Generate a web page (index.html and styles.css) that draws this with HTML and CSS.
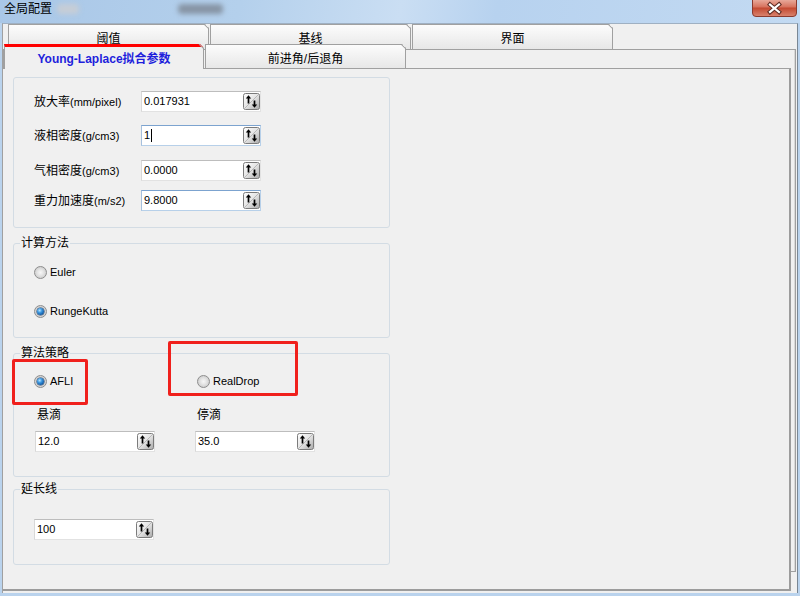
FILE: index.html
```html
<!DOCTYPE html>
<html lang="zh">
<head>
<meta charset="utf-8">
<title>全局配置</title>
<link rel="stylesheet" href="styles.css">
</head>
<body>
<svg class="defs" width="0" height="0" aria-hidden="true">
  <defs>
    <linearGradient id="sg" x1="0" y1="0" x2="1" y2="1">
      <stop offset="0" stop-color="#ffffff"/>
      <stop offset="0.5" stop-color="#e4e4e4"/>
      <stop offset="1" stop-color="#a8a8a8"/>
    </linearGradient>
    <symbol id="spinbtn" viewBox="0 0 17 17">
      <rect x="0.5" y="0.5" width="16" height="16" rx="2" fill="url(#sg)" stroke="#7b7b7b"/>
      <path d="M1.5 15.5 L15.5 1.5" stroke="#b8b8b8" stroke-width="1"/>
      <path d="M5.5 4.5 V10.5" stroke="#000" stroke-width="1.7"/>
      <path d="M2.8 5.6 L5.5 2.2 L8.2 5.6 Z" fill="#000"/>
      <path d="M11.5 7.5 V12.5" stroke="#000" stroke-width="1.7"/>
      <path d="M8.8 11.4 L11.5 14.8 L14.2 11.4 Z" fill="#000"/>
    </symbol>
  </defs>
</svg>
<div class="window">
  <div class="titlebar">
    <span class="title">全局配置</span>
    <span class="redact r-a"></span>
    <span class="redact r-b"></span>
    <div class="close">
      <svg width="45" height="17" viewBox="0 0 45 17">
        <defs>
          <linearGradient id="cg" x1="0" y1="0" x2="0" y2="1">
            <stop offset="0" stop-color="#eab0a2"/>
            <stop offset="0.45" stop-color="#d7735e"/>
            <stop offset="0.52" stop-color="#c34a32"/>
            <stop offset="1" stop-color="#da8570"/>
          </linearGradient>
        </defs>
        <path d="M0.5 -1 V13 Q0.5 16.5 4 16.5 H41 Q44.5 16.5 44.5 13 V-1" fill="url(#cg)" stroke="#8a3b2f"/>
        <path d="M18 4.5 L27 12 M27 4.5 L18 12" stroke="#5b2a22" stroke-width="4.2" stroke-linecap="square"/>
        <path d="M18 4.5 L27 12 M27 4.5 L18 12" stroke="#ffffff" stroke-width="2.2" stroke-linecap="square"/>
      </svg>
    </div>
  </div>

  <div class="client">
    <div class="backbox"></div>
    <div class="tabs">
      <div class="row back">
        <div class="tab">阈值</div>
        <div class="tab">基线</div>
        <div class="tab">界面</div>
      </div>
      <div class="row front">
        <div class="tab sel">Young-Laplace拟合参数</div>
        <div class="tab">前进角/后退角</div>
      </div>
    </div>

    <div class="pane">
      <fieldset class="group g1">
        <div class="field">
          <span class="lbl">放大率<span class="en">(mm/pixel)</span></span>
          <div class="spin"><span class="val">0.017931</span><svg class="sb"><use href="#spinbtn"/></svg></div>
        </div>
        <div class="field">
          <span class="lbl">液相密度<span class="en">(g/cm3)</span></span>
          <div class="spin focus"><span class="val">1<span class="caret"></span></span><svg class="sb"><use href="#spinbtn"/></svg></div>
        </div>
        <div class="field r3">
          <span class="lbl">气相密度<span class="en">(g/cm3)</span></span>
          <div class="spin"><span class="val">0.0000</span><svg class="sb"><use href="#spinbtn"/></svg></div>
        </div>
        <div class="field r4">
          <span class="lbl">重力加速度<span class="en">(m/s2)</span></span>
          <div class="spin focus"><span class="val">9.8000</span><svg class="sb"><use href="#spinbtn"/></svg></div>
        </div>
      </fieldset>

      <fieldset class="group g2">
        <legend>计算方法</legend>
        <div class="opt"><span class="radio"></span><span class="otext">Euler</span></div>
        <div class="opt second"><span class="radio"><span class="dot"></span></span><span class="otext">RungeKutta</span></div>
      </fieldset>

      <fieldset class="group g3">
        <legend>算法策略</legend>
        <div class="cols">
          <div class="col c1">
            <div class="opt"><span class="radio"><span class="dot"></span></span><span class="otext">AFLI</span></div>
            <span class="sub">悬滴</span>
            <div class="spin"><span class="val">12.0</span><svg class="sb"><use href="#spinbtn"/></svg></div>
          </div>
          <div class="col c2">
            <div class="opt"><span class="radio"></span><span class="otext">RealDrop</span></div>
            <span class="sub">停滴</span>
            <div class="spin"><span class="val">35.0</span><svg class="sb"><use href="#spinbtn"/></svg></div>
          </div>
        </div>
      </fieldset>

      <fieldset class="group g4">
        <legend>延长线</legend>
        <div class="spin ext"><span class="val">100</span><svg class="sb"><use href="#spinbtn"/></svg></div>
      </fieldset>
    </div>
  </div>

  <div class="mark m1"></div>
  <div class="mark m2"></div>
</div>
</body>
</html>
```

FILE: styles.css
```css
* {
  box-sizing: border-box;
}

html,
body {
  margin: 0;
  padding: 0;
}

body {
  width: 800px;
  height: 596px;
  overflow: hidden;
  font-family: "Liberation Sans", "Noto Sans CJK SC", sans-serif;
  font-size: 12px;
  color: #000;
  background: #bcd4ed;
}

.defs {
  position: absolute;
  width: 0;
  height: 0;
}

.window {
  position: relative;
  width: 800px;
  height: 596px;
  display: flex;
  flex-direction: column;
  background: #bad3ed;
}

/* ---------- title bar ---------- */
.titlebar {
  height: 23px;
  flex: none;
  display: flex;
  align-items: flex-start;
  background: linear-gradient(100deg, #a9c7e7 0%, #b4d0ec 30%, #cadef3 50%, #b7d2ef 62%, #c3daf2 100%);
}

.title {
  margin: 2px 0 0 4px;
  line-height: 14px;
  font-size: 12px;
}

.redact {
  display: inline-block;
  height: 10px;
  margin-top: 4px;
  border-radius: 4px;
  filter: blur(2.5px);
}

.r-a {
  margin-left: 5px;
  width: 22px;
  background: #c6cdd6;
}

.r-b {
  margin-left: 99px;
  width: 45px;
  background: #8795a5;
}

.close {
  margin-left: auto;
  margin-right: 3px;
  width: 45px;
  height: 17px;
}

.close svg {
  display: block;
}

/* ---------- client area ---------- */
.client {
  position: relative;
  margin-left: 2px;
  width: 796px;
  height: 570px;
  border-top: 1px solid #9fb0c2;
  border-left: 1px solid #a0a0a0;
  border-right: 1px solid #7a8794;
  background: #f0f0f0;
}

.backbox {
  position: absolute;
  left: 0;
  top: 25px;
  width: 793px;
  height: 523px;
  border: 1px solid #a0a0a0;
  box-shadow: inset -1px 0 0 #d8d8d8;
}

/* ---------- tabs ---------- */
.tabs {
  position: relative;
  z-index: 1;
}

.row {
  display: flex;
  gap: 1px;
}

.back {
  margin-left: 5px;
  height: 25px;
}

.front {
  margin-top: -5px;
  margin-left: 1px;
  height: 24px;
}

.tab {
  position: relative;
  width: 201px;
  height: 25px;
  border: 1px solid #a0a0a0;
  border-bottom: 0;
  background: linear-gradient(#fcfcfc, #e7e7e7);
  text-align: center;
  padding-top: 7px;
  line-height: 14px;
  font-size: 12px;
  clip-path: polygon(0 0, calc(100% - 4px) 0, 100% 4px, 100% 100%, 0 100%);
}

.tab::after {
  content: "";
  position: absolute;
  top: 1px;
  right: -2px;
  width: 7px;
  height: 1px;
  background: #a0a0a0;
  transform: rotate(45deg);
}

.front .tab {
  height: 24px;
}

.front .tab.sel {
  width: 200px;
  height: 25px;
  border-top: 3px solid #ff0000;
  background: #f0f0f0;
  padding-top: 5px;
  color: #1f1fdc;
  font-weight: bold;
}

.front .tab.sel::after {
  top: -1px;
}

/* ---------- pane ---------- */
.pane {
  position: relative;
  z-index: 0;
  width: 788px;
  height: 523px;
  border-top: 1px solid #a0a0a0;
  border-right: 2px solid #9c9c9c;
  border-bottom: 2px solid #9c9c9c;
  background: #f0f0f0;
  padding: 8px 0 0 10px;
}

.group {
  display: block;
  width: 377px;
  margin: 0;
  padding: 0;
  min-width: 0;
  border: 1px solid #d3dce4;
  border-radius: 3px;
}

.group legend {
  margin-left: 6px;
  padding: 0 1px;
  height: 14px;
  line-height: 14px;
  font-size: 12px;
}

.g1 {
  padding: 13px 0 16px 20px;
}

.g2 {
  margin-top: 8px;
  padding: 16px 0 19px 0;
}

.g3 {
  margin-top: 8px;
  padding: 15px 0 24px 0;
}

.g4 {
  margin-top: 5px;
  padding: 23px 0 24px 0;
}

.g2 .opt,
.g3 .cols,
.g4 .ext {
  margin-left: 20px;
}

/* fields */
.field {
  display: flex;
  align-items: center;
  height: 21px;
}

.field + .field {
  margin-top: 13px;
}

.field.r3 {
  margin-top: 14px;
}

.field.r4 {
  margin-top: 9px;
}

.lbl {
  width: 107px;
  line-height: 14px;
  font-size: 12px;
  white-space: nowrap;
}

.en {
  font-size: 11px;
}

.spin {
  width: 120px;
  height: 21px;
  display: flex;
  align-items: center;
  padding-left: 2px;
  border: 1px solid;
  border-color: #bdbdbd #e2e2e2 #e2e2e2 #d8d8d8;
  background: #fff;
}

.spin.focus {
  border-color: #7ca3cf #b7d0e9 #b7d0e9 #a6c0dd;
}

.val {
  flex: 1;
  font-size: 11px;
  line-height: 13px;
  white-space: nowrap;
}

.caret {
  display: inline-block;
  width: 1px;
  height: 13px;
  margin-left: 1px;
  background: #000;
  vertical-align: top;
}

.sb {
  width: 17px;
  height: 17px;
  flex: none;
  display: block;
}

/* radios */
.opt {
  display: flex;
  align-items: center;
  height: 13px;
}

.opt.second {
  margin-top: 26px;
}

.radio {
  width: 13px;
  height: 13px;
  flex: none;
  border-radius: 50%;
  border: 1px solid #8d8d8d;
  background: radial-gradient(circle at 50% 50%, #f6f6f6 0, #e9e9e9 30%, #d2d2d2 70%, #ececec 100%);
  display: flex;
  align-items: center;
  justify-content: center;
}

.dot {
  width: 7px;
  height: 7px;
  border-radius: 50%;
  background: radial-gradient(circle at 38% 35%, #b8e6ff 0, #3b97e0 35%, #155ea8 70%, #0b3564 100%);
  box-shadow: 0 0 0 0.5px #1d3e66;
}

.otext {
  margin-left: 3px;
  font-size: 11px;
  line-height: 13px;
}

/* strategy columns */
.cols {
  display: grid;
  grid-template-columns: 161px 140px;
}

.col {
  display: flex;
  flex-direction: column;
  align-items: flex-start;
}

.sub {
  margin-top: 20px;
  line-height: 14px;
  font-size: 12px;
}

.col .spin {
  margin-top: 9px;
}

.c1 .sub {
  margin-left: 3px;
}

.c1 .spin {
  margin-left: 1px;
}

.c2 .opt,
.c2 .sub {
  margin-left: 2px;
}

/* annotation rectangles */
.mark {
  position: absolute;
  border: 3px solid #f0201c;
  border-radius: 2px;
}

.m1 {
  left: 12px;
  top: 359px;
  width: 76px;
  height: 46px;
}

.m2 {
  left: 168px;
  top: 341px;
  width: 130px;
  height: 55px;
}
```
